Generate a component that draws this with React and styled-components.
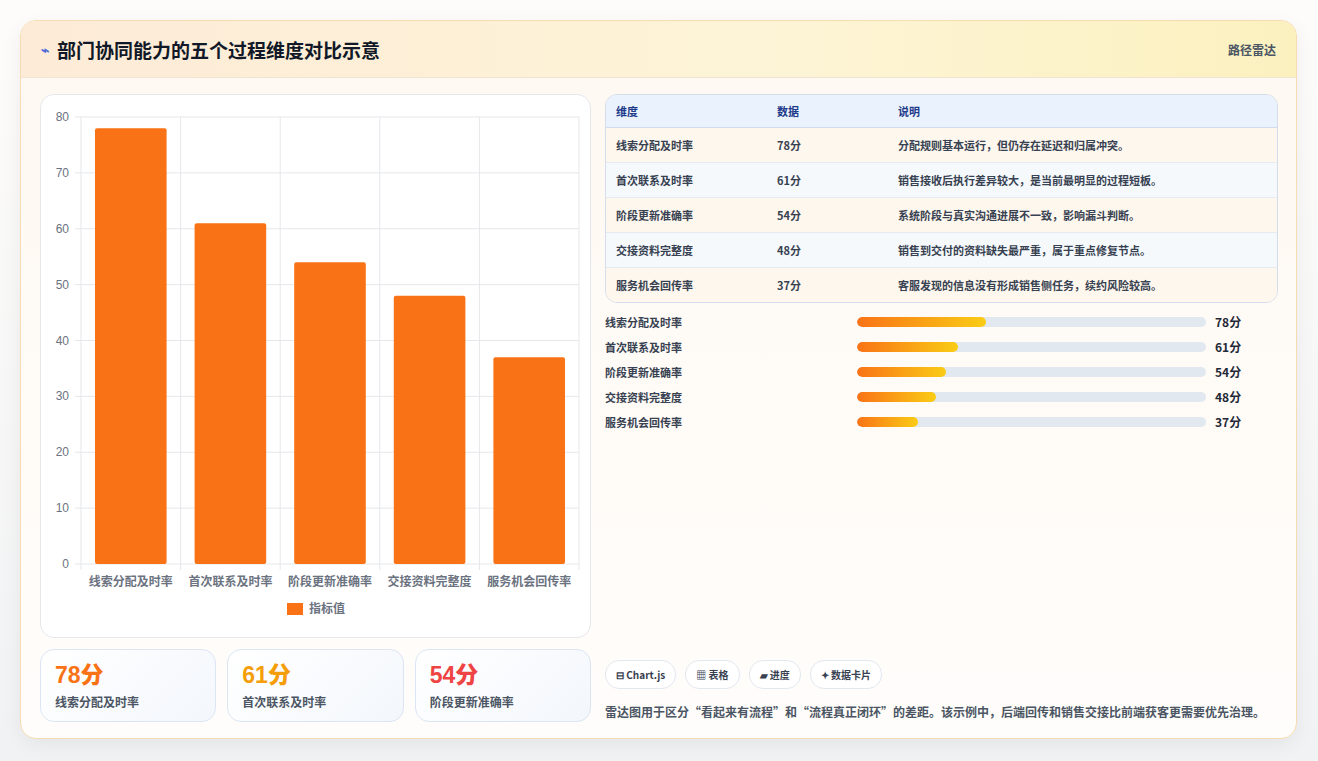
import React from "react";
import styled, { createGlobalStyle } from "styled-components";

const GlobalStyle = createGlobalStyle`
  body {
    margin: 0;
    background: #f3f4f6;
    font-family: "Noto Sans CJK SC", "Noto Sans", sans-serif;
  }
`;

const rows = [
  { name: "线索分配及时率", value: 78, note: "分配规则基本运行，但仍存在延迟和归属冲突。" },
  { name: "首次联系及时率", value: 61, note: "销售接收后执行差异较大，是当前最明显的过程短板。" },
  { name: "阶段更新准确率", value: 54, note: "系统阶段与真实沟通进展不一致，影响漏斗判断。" },
  { name: "交接资料完整度", value: 48, note: "销售到交付的资料缺失最严重，属于重点修复节点。" },
  { name: "服务机会回传率", value: 37, note: "客服发现的信息没有形成销售侧任务，续约风险较高。" },
];

const Chart = () => {
  const L = 40, R = 538, T = 22, B = 469;
  const colW = (R - L) / 5;
  const y = (v) => B - ((B - T) * v) / 80;
  return (
    <svg width="550" height="544" style={{ display: "block" }}>
      {[0, 10, 20, 30, 40, 50, 60, 70, 80].map((v) => (
        <g key={v}>
          <line x1={L - 6} x2={R} y1={y(v)} y2={y(v)} stroke="#e5e7eb" />
          <text x={L - 12} y={y(v) + 4} fontSize="12" fill="#6b7280" textAnchor="end" fontFamily="Liberation Sans, sans-serif">{v}</text>
        </g>
      ))}
      {[0, 1, 2, 3, 4, 5].map((i) => (
        <line key={i} x1={L + i * colW} x2={L + i * colW} y1={T} y2={B + 6} stroke="#e5e7eb" />
      ))}
      {rows.map((r, i) => (
        <g key={r.name}>
          <rect x={L + i * colW + 14} y={y(r.value)} width={colW - 28} height={B - y(r.value)} rx="2" fill="#f97316" />
          <text x={L + i * colW + colW / 2} y={B + 22} fontSize="12" fontWeight="600" fill="#6b7280" textAnchor="middle">{r.name}</text>
        </g>
      ))}
      <rect x="246" y="508" width="16" height="12" fill="#f97316" />
      <text x="268" y="518" fontSize="12" fontWeight="600" fill="#6b7280">指标值</text>
    </svg>
  );
};

const statColors = ["#f97316", "#f59e0b", "#ef4444"];

export default function App() {
  return (
    <Page>
      <GlobalStyle />
      <Card>
        <Header>
          <Title><Bolt>⌁</Bolt>部门协同能力的五个过程维度对比示意</Title>
          <Tag>路径雷达</Tag>
        </Header>
        <Body>
          <LeftCol>
            <ChartBox><Chart /></ChartBox>
            <Stats>
              {rows.slice(0, 3).map((r, i) => (
                <Stat key={r.name}>
                  <StatValue color={statColors[i]}>{r.value}分</StatValue>
                  <StatLabel>{r.name}</StatLabel>
                </Stat>
              ))}
            </Stats>
          </LeftCol>
          <RightCol>
            <Table>
              <thead>
                <tr><Th>维度</Th><Th>数据</Th><Th>说明</Th></tr>
              </thead>
              <tbody>
                {rows.map((r, i) => (
                  <Tr key={r.name} odd={i % 2 === 1}>
                    <Td>{r.name}</Td><Td>{r.value}分</Td><Td>{r.note}</Td>
                  </Tr>
                ))}
              </tbody>
            </Table>
            <Progress>
              {rows.map((r) => (
                <PRow key={r.name}>
                  <PLabel>{r.name}</PLabel>
                  <Track><Fill style={{ width: `${r.value * 0.474}%` }} /></Track>
                  <PValue>{r.value}分</PValue>
                </PRow>
              ))}
            </Progress>
            <Footer>
              <Chips>
                <Chip>⊟ Chart.js</Chip>
                <Chip>▦ 表格</Chip>
                <Chip>▰ 进度</Chip>
                <Chip>✦ 数据卡片</Chip>
              </Chips>
              <Note>雷达图用于区分“看起来有流程”和“流程真正闭环”的差距。该示例中，后端回传和销售交接比前端获客更需要优先治理。</Note>
            </Footer>
          </RightCol>
        </Body>
      </Card>
    </Page>
  );
}

const Page = styled.div`
  padding: 20px 20px 21px;
  min-height: 761px;
  box-sizing: border-box;
  background: linear-gradient(#fdfcfa, #f1f2f4);
`;

const Card = styled.div`
  width: 1277px;
  height: 719px;
  box-sizing: border-box;
  border: 1px solid #f6dcb2;
  border-radius: 16px;
  overflow: hidden;
  background: linear-gradient(180deg, #fef8f1, #fffdfb);
  box-shadow: 0 6px 20px rgba(0, 0, 0, 0.06);
  display: flex;
  flex-direction: column;
`;

const Header = styled.div`
  height: 56px;
  flex-shrink: 0;
  display: flex;
  align-items: center;
  justify-content: space-between;
  padding: 0 20px;
  background: linear-gradient(90deg, #fdebd8, #fdf4d6 60%, #fbf1bf);
  border-bottom: 1px solid #f1e4d2;
`;

const Title = styled.h1`
  margin: 0;
  font-size: 19px;
  font-weight: 700;
  color: #111827;
  display: flex;
  align-items: center;
  gap: 8px;
`;

const Bolt = styled.span`
  color: #4f6bd8;
  font-size: 14px;
`;

const Tag = styled.span`
  font-size: 12px;
  font-weight: 600;
  color: #4b5563;
`;

const Body = styled.div`
  flex: 1;
  display: grid;
  grid-template-columns: 551px 673px;
  gap: 14px;
  padding: 16px 18px 18px 19px;
`;

const LeftCol = styled.div`
  display: flex;
  flex-direction: column;
  gap: 11px;
`;

const ChartBox = styled.div`
  height: 544px;
  box-sizing: border-box;
  background: #fff;
  border: 1px solid #e5e7eb;
  border-radius: 14px;
  overflow: hidden;
`;

const Stats = styled.div`
  display: grid;
  grid-template-columns: repeat(3, 1fr);
  gap: 11px;
`;

const Stat = styled.div`
  height: 73px;
  box-sizing: border-box;
  padding: 11px 14px;
  border: 1px solid #dbe5f3;
  border-radius: 14px;
  background: linear-gradient(135deg, #ffffff, #f3f7fc);
`;

const StatValue = styled.div`
  font-size: 23px;
  font-weight: 800;
  line-height: 28px;
  color: ${(p) => p.color};
  font-family: "Liberation Sans", "Noto Sans CJK SC", sans-serif;
`;

const StatLabel = styled.div`
  margin-top: 4px;
  font-size: 12px;
  font-weight: 600;
  color: #4b5563;
`;

const RightCol = styled.div`
  display: flex;
  flex-direction: column;
`;

const Table = styled.table`
  width: 100%;
  border-collapse: separate;
  border-spacing: 0;
  border: 1px solid #d5dceb;
  border-radius: 12px;
  overflow: hidden;
  font-size: 11px;
  font-weight: 600;
`;

const Th = styled.th`
  text-align: left;
  height: 32px;
  padding: 0 10px;
  color: #1e3a8a;
  background: #eaf3fd;
  border-bottom: 1px solid #cfdcee;
  &:nth-child(1) { width: 141px; }
  &:nth-child(2) { width: 101px; }
`;

const Tr = styled.tr`
  background: ${(p) => (p.odd ? "#f6f9fc" : "#fef7ee")};
`;

const Td = styled.td`
  height: 34px;
  padding: 0 10px;
  color: #374151;
  border-top: 1px solid #e5ebf3;
  tr:first-child & { border-top: none; }
`;

const Progress = styled.div`
  margin-top: 10px;
  display: flex;
  flex-direction: column;
  gap: 8px;
`;

const PRow = styled.div`
  display: flex;
  align-items: center;
  height: 17px;
`;

const PLabel = styled.div`
  width: 252px;
  font-size: 11px;
  font-weight: 600;
  color: #374151;
`;

const Track = styled.div`
  width: 349px;
  height: 10px;
  border-radius: 5px;
  background: #e2e8f0;
  overflow: hidden;
`;

const Fill = styled.div`
  height: 100%;
  border-radius: 5px;
  background: linear-gradient(90deg, #f97316, #facc15);
`;

const PValue = styled.div`
  margin-left: 9px;
  font-size: 12px;
  font-weight: 700;
  color: #1f2937;
`;

const Footer = styled.div`
  margin-top: auto;
`;

const Chips = styled.div`
  display: flex;
  gap: 9px;
`;

const Chip = styled.span`
  height: 27px;
  padding: 0 10px;
  display: inline-flex;
  align-items: center;
  border: 1px solid #e2e8f0;
  border-radius: 14px;
  background: #fff;
  font-size: 10px;
  font-weight: 700;
  color: #374151;
`;

const Note = styled.p`
  margin: 12px 0 0;
  font-size: 12px;
  font-weight: 600;
  line-height: 21px;
  color: #4b5563;
`;
